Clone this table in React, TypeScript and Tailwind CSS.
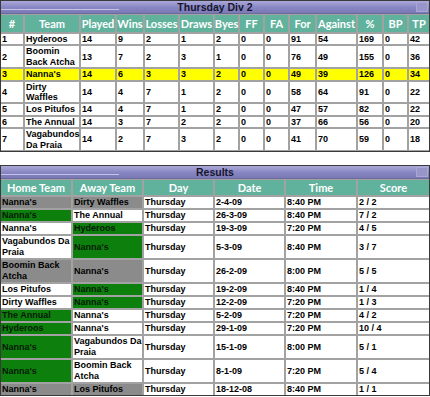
import React from 'react';

const standings: { cells: (string | React.ReactNode)[]; hi?: boolean }[] = [
  { cells: ['1', 'Hyderoos', '14', '9', '2', '1', '2', '0', '0', '91', '54', '169', '0', '42'] },
  { cells: ['2', <>Boomin<br />Back Atcha</>, '13', '7', '2', '3', '1', '0', '0', '76', '49', '155', '0', '36'] },
  { cells: ['3', "Nanna's", '14', '6', '3', '3', '2', '0', '0', '49', '39', '126', '0', '34'], hi: true },
  { cells: ['4', <>Dirty<br />Waffles</>, '14', '4', '7', '1', '2', '0', '0', '58', '64', '91', '0', '22'] },
  { cells: ['5', 'Los Pitufos', '14', '4', '7', '1', '2', '0', '0', '47', '57', '82', '0', '22'] },
  { cells: ['6', 'The Annual', '14', '3', '7', '2', '2', '0', '0', '37', '66', '56', '0', '20'] },
  { cells: ['7', <>Vagabundos<br />Da Praia</>, '14', '2', '7', '3', '2', '0', '0', '41', '70', '59', '0', '18'] },
];

const standHeads = ['#', 'Team', 'Played', 'Wins', 'Losses', 'Draws', 'Byes', 'FF', 'FA', 'For', 'Against', '%', 'BP', 'TP'];

// g = green (win), k = grey (draw), w = white
type Shade = 'g' | 'k' | 'w';
const results: { home: React.ReactNode; hs: Shade; away: React.ReactNode; as: Shade; date: string; time: string; score: string }[] = [
  { home: "Nanna's", hs: 'k', away: 'Dirty Waffles', as: 'k', date: '2-4-09', time: '8:40 PM', score: '2 / 2' },
  { home: "Nanna's", hs: 'g', away: 'The Annual', as: 'w', date: '26-3-09', time: '8:40 PM', score: '7 / 2' },
  { home: "Nanna's", hs: 'w', away: 'Hyderoos', as: 'g', date: '19-3-09', time: '7:20 PM', score: '4 / 5' },
  { home: <>Vagabundos Da<br />Praia</>, hs: 'w', away: "Nanna's", as: 'g', date: '5-3-09', time: '8:40 PM', score: '3 / 7' },
  { home: <>Boomin Back<br />Atcha</>, hs: 'k', away: "Nanna's", as: 'k', date: '26-2-09', time: '8:00 PM', score: '5 / 5' },
  { home: 'Los Pitufos', hs: 'w', away: "Nanna's", as: 'g', date: '19-2-09', time: '8:40 PM', score: '1 / 4' },
  { home: 'Dirty Waffles', hs: 'w', away: "Nanna's", as: 'g', date: '12-2-09', time: '7:20 PM', score: '1 / 3' },
  { home: 'The Annual', hs: 'g', away: "Nanna's", as: 'w', date: '5-2-09', time: '7:20 PM', score: '4 / 2' },
  { home: 'Hyderoos', hs: 'g', away: "Nanna's", as: 'w', date: '29-1-09', time: '7:20 PM', score: '10 / 4' },
  { home: "Nanna's", hs: 'g', away: <>Vagabundos Da<br />Praia</>, as: 'w', date: '15-1-09', time: '8:00 PM', score: '5 / 1' },
  { home: "Nanna's", hs: 'g', away: <>Boomin Back<br />Atcha</>, as: 'w', date: '8-1-09', time: '7:20 PM', score: '5 / 4' },
  { home: "Nanna's", hs: 'k', away: 'Los Pitufos', as: 'k', date: '18-12-08', time: '8:40 PM', score: '1 / 1' },
];

const shadeBg: Record<Shade, string> = {
  g: 'bg-[#0c7f0c] text-[#071a07]',
  k: 'bg-[#8b8b8b] text-black',
  w: 'bg-white text-black',
};

function TitleBar({ title }: { title: string }) {
  return (
    <div className="relative h-[13px] flex items-center justify-center bg-linear-to-b from-[#aba9d8] via-[#8a88c4] to-[#7b79b5] border-b border-[#6b6a9c]">
      <div className="absolute left-0 top-[8px] h-px w-[118px] bg-[#c4c2e6]" />
      <span className="relative text-[10.5px] leading-none font-bold text-[#15152e] font-['Liberation_Sans',Arial,sans-serif]">
        {title}
      </span>
      <div className="absolute right-px top-px h-[10px] w-[12px] border border-[#a9a7d8] bg-[#9795ca]" />
    </div>
  );
}

function Head({ children, tall }: { children: React.ReactNode; tall?: boolean }) {
  return (
    <div
      className={`${tall ? 'h-[17px]' : 'h-[15px]'} bg-[#61b29d] text-white flex items-center justify-center whitespace-nowrap font-['Lato',sans-serif] font-bold text-[11px] leading-none`}
    >
      {children}
    </div>
  );
}

export default function App() {
  return (
    <div className="w-[430px] bg-white font-['Liberation_Sans',Arial,sans-serif] text-[9px] font-bold text-black">
      {/* Standings */}
      <div className="border border-[#3a3a3a]">
        <TitleBar title="Thursday Div 2" />
        <div className="grid grid-cols-[22px_54px_34px_26px_33px_33px_23px_23px_23px_25px_39px_24px_23px_1fr] gap-[2px] bg-[#a2a2a2] pt-px pb-px">
          {standHeads.map((h) => (
            <Head key={h} tall>
              {h}
            </Head>
          ))}
          {standings.map((r, i) =>
            r.cells.map((c, j) => (
              <div
                key={`${i}-${j}`}
                className={`flex items-center pl-px whitespace-nowrap leading-[10.4px] ${r.hi ? 'bg-[#ffff00]' : 'bg-white'}`}
              >
                <span>{c}</span>
              </div>
            ))
          )}
        </div>
      </div>

      <div className="h-[13px]" />

      {/* Results */}
      <div className="border border-[#3a3a3a]">
        <TitleBar title="Results" />
        <div className="grid grid-cols-[70px_69px_69px_69px_70px_1fr] gap-[2px] bg-[#a2a2a2] pt-px">
          {['Home Team', 'Away Team', 'Day', 'Date', 'Time', 'Score'].map((h) => (
            <Head key={h}>{h}</Head>
          ))}
          {results.map((r, i) => (
            <React.Fragment key={i}>
              <div className={`flex items-center pl-px whitespace-nowrap leading-[11px] ${shadeBg[r.hs]}`}>
                <span>{r.home}</span>
              </div>
              <div className={`flex items-center pl-px whitespace-nowrap leading-[11px] ${shadeBg[r.as]}`}>
                <span>{r.away}</span>
              </div>
              <div className="flex items-center pl-px bg-white leading-[11px]">Thursday</div>
              <div className="flex items-center pl-px bg-white leading-[11px]">{r.date}</div>
              <div className="flex items-center pl-px bg-white leading-[11px]">{r.time}</div>
              <div className="flex items-center pl-px bg-white leading-[11px]">{r.score}</div>
            </React.Fragment>
          ))}
        </div>
      </div>
    </div>
  );
}
